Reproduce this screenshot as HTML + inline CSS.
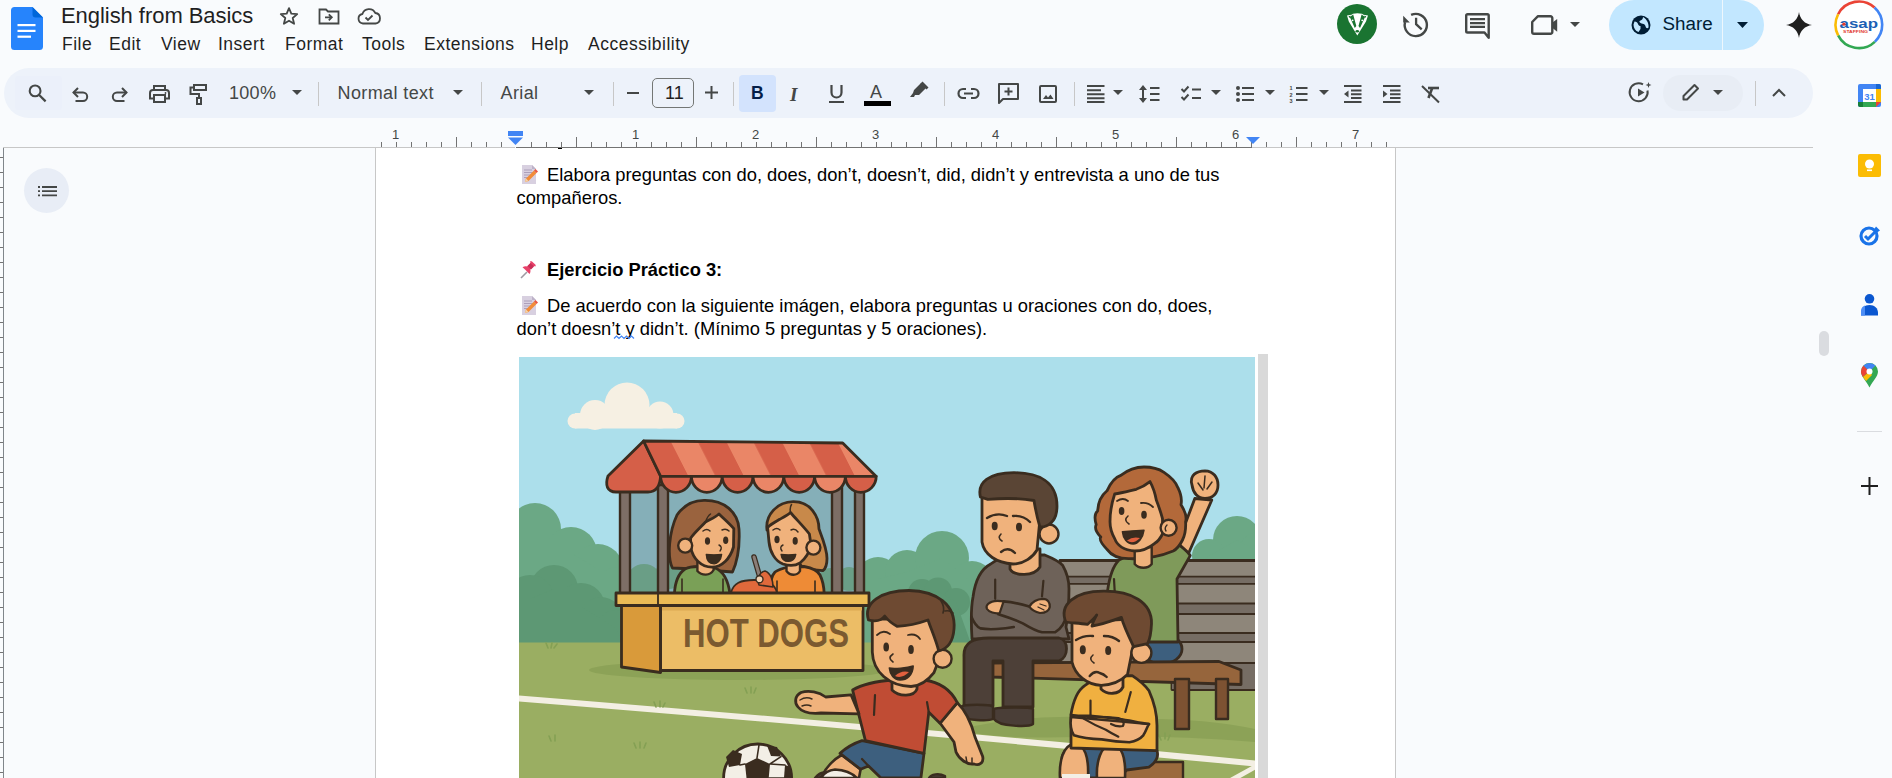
<!DOCTYPE html>
<html><head><meta charset="utf-8">
<style>
*{box-sizing:border-box;margin:0;padding:0}
html,body{width:1892px;height:778px;overflow:hidden;background:#f9fbfd;font-family:"Liberation Sans",sans-serif;color:#1f1f1f}
body{position:relative}
.a{position:absolute}
.t{position:absolute;white-space:nowrap;line-height:1}
.menu{font-size:17.5px;color:#1f1f1f;top:36px;letter-spacing:0.5px}
svg{position:absolute;overflow:visible}
.s{fill:none;stroke:#444746;stroke-width:2;stroke-linecap:butt;stroke-linejoin:miter}
.f{fill:#444746}
.dt{position:absolute;white-space:nowrap;line-height:1;font-size:18.33px;color:#000}
</style></head><body>
<!-- docs icon -->
<svg style="left:11px;top:7px" width="32" height="43" viewBox="0 0 32 43">
<path d="M3.5 0H21.5L32 10.5V39.5a3.5 3.5 0 0 1-3.5 3.5H3.5A3.5 3.5 0 0 1 0 39.5V3.5A3.5 3.5 0 0 1 3.5 0z" fill="#2684fc"/>
<path d="M21.5 0L32 10.5H24.5a3 3 0 0 1-3-3z" fill="#0066da"/>
<rect x="6.5" y="17" width="18" height="2.2" fill="#fff"/>
<rect x="6.5" y="22.8" width="18" height="2.2" fill="#fff"/>
<rect x="6.5" y="28.6" width="13.5" height="2.2" fill="#fff"/>
</svg>
<div class="t" style="left:61px;top:5px;font-size:22px;color:#1f1f1f;letter-spacing:-0.05px">English from Basics</div>
<!-- star -->
<svg style="left:278px;top:6px" width="22" height="20" viewBox="0 0 22 20"><path d="M11 2.2l2.3 5.4 5.9.5-4.5 3.9 1.4 5.8L11 14.7l-5.1 3.1 1.4-5.8-4.5-3.9 5.9-.5z" class="s" style="stroke-width:1.8;stroke-linejoin:round"/></svg>
<!-- folder move -->
<svg style="left:318px;top:8px" width="22" height="17" viewBox="0 0 22 17"><path d="M1.5 1.5h6.5l2 2h10.5v12h-19z" class="s" style="stroke-width:1.8"/><path d="M7 9.3h6.5M10.8 6.3l3 3-3 3" class="s" style="stroke-width:1.8"/></svg>
<!-- cloud check -->
<svg style="left:357px;top:8px" width="24" height="17" viewBox="0 0 24 17"><path d="M6 15.5a4.8 4.8 0 0 1-.6-9.5A7 7 0 0 1 18.3 5a5.3 5.3 0 0 1 .2 10.5z" class="s" style="stroke-width:1.8;stroke-linejoin:round"/><path d="M8.5 9.5l2.5 2.5 4.5-4.5" class="s" style="stroke-width:1.8"/></svg>

<div class="t menu" style="left:62px">File</div>
<div class="t menu" style="left:109px">Edit</div>
<div class="t menu" style="left:161px">View</div>
<div class="t menu" style="left:218px">Insert</div>
<div class="t menu" style="left:285px">Format</div>
<div class="t menu" style="left:362px">Tools</div>
<div class="t menu" style="left:424px">Extensions</div>
<div class="t menu" style="left:531px">Help</div>
<div class="t menu" style="left:588px">Accessibility</div>

<!-- top right -->
<div class="a" style="left:1337px;top:4px;width:40px;height:40px;border-radius:50%;background:#1a7431"></div>
<svg style="left:1337px;top:4px" width="40" height="40" viewBox="0 0 40 40">
<path d="M10 11.5L14.5 10.8L16 9.8Q20.3 8.5 25 9.8L26.5 10.8L31 11.5L29 17.5L20.3 31.5L11.8 17.5Z" fill="#fff"/>
<path d="M12.8 13L16.2 10.5L19.3 22L17.8 24ZM28 13L24.6 10.5L21.5 22L23 24Z" fill="#1a7431"/>
<path d="M11.5 12.2L13.8 11.8L12.6 14z M29.3 12.2L27 11.8L28.2 14z" fill="#1a7431"/>
<circle cx="15.6" cy="16.3" r="0.9" fill="#fff"/><circle cx="25.2" cy="16.3" r="0.9" fill="#fff"/>
<ellipse cx="20.3" cy="27.2" rx="1.8" ry="1.3" fill="#1a7431"/>
</svg>
<!-- history -->
<svg style="left:1401px;top:11px" width="28" height="28" viewBox="0 0 28 28"><path d="M10.11 3.94A11.1 11.1 0 1 1 4.08 11.13" class="s" style="stroke-width:2.4"/><path d="M2.2 4.8V11.4H8.8Z" class="f"/><path d="M15.1 6.8V13.2L20.7 18.4" class="s" style="stroke-width:2.3"/></svg>
<!-- comments -->
<svg style="left:1463px;top:12px" width="28" height="27" viewBox="0 0 28 27"><path d="M4.5 2.2H24.4a1.3 1.3 0 0 1 1.3 1.3V25.8L21.5 20.5H4.5a1.3 1.3 0 0 1-1.3-1.3V3.5a1.3 1.3 0 0 1 1.3-1.3z" class="s" style="stroke-width:2.4;stroke-linejoin:round"/><path d="M7 7.1h15M7 11.1h15M7 14.9h15" class="s" style="stroke-width:2.1"/></svg>
<!-- meet -->
<svg style="left:1531px;top:14px" width="30" height="22" viewBox="0 0 30 22"><path d="M7 2.2h12.5a1.8 1.8 0 0 1 1.8 1.8V18a1.8 1.8 0 0 1-1.8 1.8H3a1.8 1.8 0 0 1-1.8-1.8V8z" class="s" style="stroke-width:2.4;stroke-linejoin:round"/><path d="M21.5 8.5l4.7-3.6V17.7l-4.7-3.6z" class="f"/></svg>
<svg style="left:1570px;top:22px" width="10" height="5" viewBox="0 0 10 5"><path d="M0 0h10L5 5z" class="f"/></svg>
<!-- share -->
<div class="a" style="left:1609px;top:0px;width:155px;height:50px;border-radius:25px;background:#c2e7ff"></div>
<div class="a" style="left:1722px;top:0px;width:1px;height:50px;background:#f9fbfd;opacity:.8"></div>
<svg style="left:1631px;top:15px" width="20" height="20" viewBox="0 0 20 20"><circle cx="10" cy="10" r="9.5" fill="#001d35"/><path d="M3.5 6.5c2 0 3 1 3.5 2.5s1.5 2 2.5 2v3l-2 3c-3-1-5-4-5-7.5zM12 2c0 2 -1 3-2.5 3.5S8 7 9.5 8s3 .5 4 1.5 1 2 1.5 3 2 1 2.5 0c.5-3-1-8-5.5-10.5z" fill="#c2e7ff"/></svg>
<div class="t" style="left:1662.5px;top:15px;font-size:18.8px;color:#001d35">Share</div>
<svg style="left:1737px;top:22px" width="11" height="6" viewBox="0 0 11 6"><path d="M0 0h11L5.5 6z" fill="#001d35"/></svg>
<!-- gemini -->
<svg style="left:1786px;top:12px" width="26" height="26" viewBox="0 0 26 26"><path d="M13 0C13.8 7 19 12.2 26 13 19 13.8 13.8 19 13 26 12.2 19 7 13.8 0 13 7 12.2 12.2 7 13 0z" fill="#1f1f1f"/></svg>
<!-- asap avatar -->
<svg style="left:1834px;top:0px" width="50" height="50" viewBox="0 0 50 50">
<circle cx="24.9" cy="24.8" r="23.3" fill="#fff"/>
<path d="M4.14 14.22A23.3 23.3 0 0 1 40.49 7.48" stroke="#ea4335" stroke-width="2.6" fill="none"/><path d="M40.49 7.48A23.3 23.3 0 0 1 40.79 41.84" stroke="#4285f4" stroke-width="2.6" fill="none"/><path d="M40.79 41.84A23.3 23.3 0 0 1 4.14 35.38" stroke="#34a853" stroke-width="2.6" fill="none"/><path d="M4.14 35.38A23.3 23.3 0 0 1 4.14 14.22" stroke="#fbbc04" stroke-width="2.6" fill="none"/>
<text x="5.5" y="28.4" font-family="Liberation Sans" font-weight="bold" font-size="13.5" fill="#1a5fb4" textLength="38.5" lengthAdjust="spacingAndGlyphs">asap</text>
<circle cx="9.8" cy="24.2" r="1.6" fill="#e23b2e"/>
<text x="9" y="32.6" font-family="Liberation Sans" font-weight="bold" font-size="4" fill="#e23b2e" textLength="25" lengthAdjust="spacingAndGlyphs">STAFFING</text>
</svg>

<!-- toolbar pill -->
<div class="a" style="left:4px;top:68px;width:1809px;height:50px;border-radius:25px;background:#edf2fa"></div>
<!-- search -->
<div class="a" style="left:15px;top:76px;width:47px;height:34px;border-radius:3px;background:#ebf0fa"></div><svg style="left:28px;top:83px" width="20" height="20" viewBox="0 0 20 20"><circle cx="7.1" cy="7.9" r="5.4" class="s" style="stroke-width:2.1"/><path d="M10.9 11.7L17.6 18.4" class="s" style="stroke-width:2.2"/></svg>
<!-- undo -->
<svg style="left:72px;top:87px" width="17" height="15" viewBox="0 0 17 15"><path d="M6 1L1.5 5.5 6 10" class="s" style="stroke-width:2"/><path d="M1.5 5.5h9.5a4.2 4.2 0 0 1 0 8.4H3.5" class="s" style="stroke-width:2"/></svg>
<!-- redo -->
<svg style="left:111px;top:87px" width="17" height="15" viewBox="0 0 17 15"><path d="M11 1l4.5 4.5L11 10" class="s" style="stroke-width:2"/><path d="M15.5 5.5H6a4.2 4.2 0 0 0 0 8.4h7.5" class="s" style="stroke-width:2"/></svg>
<!-- print -->
<svg style="left:149px;top:85px" width="21" height="18" viewBox="0 0 21 18"><path d="M5 5V1h11v4" class="s" style="stroke-width:2"/><path d="M4.5 13.5H1V8a3 3 0 0 1 3-3h13a3 3 0 0 1 3 3v5.5h-3.5" class="s" style="stroke-width:2"/><rect x="5" y="10" width="11" height="7" class="s" style="stroke-width:2"/><circle cx="16.5" cy="8" r="0.9" class="f"/></svg>
<!-- paint format -->
<svg style="left:189px;top:84px" width="18" height="21" viewBox="0 0 18 21"><rect x="5" y="1" width="12" height="5" class="s" style="stroke-width:2"/><path d="M5 3.5H1.5v6.5h8.5v4" class="s" style="stroke-width:2"/><rect x="8" y="14" width="4" height="6" class="s" style="stroke-width:2"/></svg>
<div class="t" style="left:229px;top:84px;font-size:18px;color:#444746;letter-spacing:0.3px">100%</div>
<svg style="left:292px;top:90px" width="10" height="5" viewBox="0 0 10 5"><path d="M0 0h10L5 5z" class="f"/></svg>
<div class="a" style="left:318px;top:82px;width:1px;height:24px;background:#c7c7c7"></div>
<div class="t" style="left:337.5px;top:84px;font-size:18px;color:#444746;letter-spacing:0.4px">Normal text</div>
<svg style="left:453px;top:90px" width="10" height="5" viewBox="0 0 10 5"><path d="M0 0h10L5 5z" class="f"/></svg>
<div class="a" style="left:481px;top:82px;width:1px;height:24px;background:#c7c7c7"></div>
<div class="t" style="left:500.5px;top:84px;font-size:18px;color:#444746;letter-spacing:0.4px">Arial</div>
<svg style="left:584px;top:90px" width="10" height="5" viewBox="0 0 10 5"><path d="M0 0h10L5 5z" class="f"/></svg>
<div class="a" style="left:613px;top:82px;width:1px;height:24px;background:#c7c7c7"></div>
<div class="a" style="left:627px;top:92px;width:12px;height:2px;background:#444746"></div>
<div class="a" style="left:652px;top:78px;width:42px;height:30px;border:1px solid #747775;border-radius:5px"></div>
<div class="t" style="left:665px;top:84px;font-size:18px;color:#1f1f1f">11</div>
<svg style="left:705px;top:86px" width="13" height="13" viewBox="0 0 13 13"><path d="M0 6.5h13M6.5 0v13" class="s" style="stroke-width:2"/></svg>
<div class="a" style="left:733px;top:82px;width:1px;height:24px;background:#c7c7c7"></div>
<div class="a" style="left:739px;top:75px;width:37px;height:37px;border-radius:4px;background:#d3e3fd"></div>
<div class="t" style="left:751px;top:85px;font-size:17.5px;font-weight:bold;color:#041e49">B</div>
<div class="t" style="left:790px;top:85px;font-size:19px;font-style:italic;font-family:'Liberation Serif';font-weight:bold;color:#444746">I</div>
<svg style="left:829px;top:85px" width="15" height="18" viewBox="0 0 15 18"><path d="M2.5 0v7.5a5 5 0 0 0 10 0V0" class="s" style="stroke-width:2.2"/><path d="M0 17h15" class="s" style="stroke-width:2"/></svg>
<div class="t" style="left:870px;top:83px;font-size:18px;color:#444746">A</div>
<div class="a" style="left:864px;top:101px;width:27px;height:5px;background:#000"></div>
<svg style="left:910px;top:81px" width="19" height="17" viewBox="0 0 19 17"><path d="M11 2l5 5-7 7H5l-1 2H0l3-4 1-3z" class="f"/><path d="M12.5 0.5l6 6-2 2-6-6z" class="f"/></svg>
<div class="a" style="left:944px;top:82px;width:1px;height:24px;background:#c7c7c7"></div>
<!-- link -->
<svg style="left:958px;top:88px" width="21" height="11" viewBox="0 0 21 11"><path d="M8 1H5a4.5 4.5 0 0 0 0 9h3M13 1h3a4.5 4.5 0 0 1 0 9h-3M6 5.5h9" class="s" style="stroke-width:2.2"/></svg>
<!-- comment add -->
<svg style="left:998px;top:83px" width="21" height="21" viewBox="0 0 21 21"><path d="M1 1h19v15H5l-4 4z" class="s" style="stroke-width:2;stroke-linejoin:round"/><path d="M10.5 4.5v8M6.5 8.5h8" class="s" style="stroke-width:2"/></svg>
<!-- image -->
<svg style="left:1039px;top:85px" width="18" height="18" viewBox="0 0 18 18"><rect x="1" y="1" width="16" height="16" rx="1" class="s" style="stroke-width:2"/><path d="M4 14l3-4 2 2.5 2.5-3 3 4.5z" class="f"/></svg>
<div class="a" style="left:1074px;top:82px;width:1px;height:24px;background:#c7c7c7"></div>
<!-- align -->
<svg style="left:1087px;top:85px" width="18" height="18" viewBox="0 0 18 18"><path d="M0 1h17.5M0 5.2h14M0 9.2h17.5M0 13.2h17.5M0 17h17.5" class="s" style="stroke-width:2"/></svg>
<svg style="left:1113px;top:90px" width="10" height="5" viewBox="0 0 10 5"><path d="M0 0h10L5 5z" class="f"/></svg>
<!-- line spacing -->
<svg style="left:1139px;top:85px" width="21" height="18" viewBox="0 0 21 18"><path d="M4 2v14" class="s" style="stroke-width:2"/><path d="M0 5l4-5 4 5zM0 13l4 5 4-5z" class="f"/><path d="M11 3h9.5M11 9h9.5M11 15h9.5" class="s" style="stroke-width:2"/></svg>
<!-- checklist -->
<svg style="left:1181px;top:85px" width="20" height="18" viewBox="0 0 20 18"><path d="M0.5 4l2.5 2.5 4.5-5M0.5 12l2.5 2.5 4.5-5" class="s" style="stroke-width:2"/><path d="M11 4.5h9M11 13h9" class="s" style="stroke-width:2"/></svg>
<svg style="left:1211px;top:90px" width="10" height="5" viewBox="0 0 10 5"><path d="M0 0h10L5 5z" class="f"/></svg>
<!-- bullets -->
<svg style="left:1236px;top:86px" width="18" height="16" viewBox="0 0 18 16"><circle cx="2" cy="2" r="2" class="f"/><circle cx="2" cy="8" r="2" class="f"/><circle cx="2" cy="14" r="2" class="f"/><path d="M6 2h12M6 8h12M6 14h12" class="s" style="stroke-width:2"/></svg>
<svg style="left:1265px;top:90px" width="10" height="5" viewBox="0 0 10 5"><path d="M0 0h10L5 5z" class="f"/></svg>
<!-- numbered -->
<svg style="left:1289px;top:85px" width="19" height="18" viewBox="0 0 19 18"><text x="0.5" y="5" font-size="5.5" font-family="Liberation Sans" font-weight="bold" fill="#444746">1</text><text x="0.5" y="11.5" font-size="5.5" font-family="Liberation Sans" font-weight="bold" fill="#444746">2</text><text x="0.5" y="18" font-size="5.5" font-family="Liberation Sans" font-weight="bold" fill="#444746">3</text><path d="M7 3h11.5M7 9h11.5M7 15h11.5" class="s" style="stroke-width:2"/></svg>
<svg style="left:1319px;top:90px" width="10" height="5" viewBox="0 0 10 5"><path d="M0 0h10L5 5z" class="f"/></svg>
<!-- indent dec -->
<svg style="left:1344px;top:85px" width="18" height="18" viewBox="0 0 18 18"><path d="M0 1h17.5M7 5.5h10.5M7 9.2h10.5M7 13h10.5M0 17h17.5" class="s" style="stroke-width:2"/><path d="M4.5 5.5v7L0 9z" class="f"/></svg>
<!-- indent inc -->
<svg style="left:1383px;top:85px" width="18" height="18" viewBox="0 0 18 18"><path d="M0 1h17.5M7 5.5h10.5M7 9.2h10.5M7 13h10.5M0 17h17.5" class="s" style="stroke-width:2"/><path d="M0 5.5v7L4.5 9z" class="f"/></svg>
<!-- clear format -->
<svg style="left:1421px;top:85px" width="19" height="18" viewBox="0 0 19 18"><path d="M7 3h11" class="s" style="stroke-width:2.6"/><path d="M11 3.5L7.5 13" class="s" style="stroke-width:2.6"/><path d="M1 1l17 16.5" class="s" style="stroke-width:2"/></svg>
<!-- right toolbar -->
<svg style="left:1630px;top:82px" width="22" height="21" viewBox="0 0 22 21"><path d="M17.5 8.5A9 9 0 1 1 13 2.3" class="s" style="stroke-width:2"/><path d="M8 6.5v8l6.5-4z" class="f"/><path d="M18.5 0l.8 2.2 2.2.8-2.2.8-.8 2.2-.8-2.2-2.2-.8 2.2-.8z" class="f"/></svg>
<div class="a" style="left:1663px;top:75px;width:80px;height:36px;border-radius:18px;background:#e8edf5"></div>
<svg style="left:1682px;top:84px" width="18" height="17" viewBox="0 0 18 17"><path d="M1.5 15.5v-3.5L12.5 1l3.5 3.5L5 15.5z" class="s" style="stroke-width:2;stroke-linejoin:round"/></svg>
<svg style="left:1713px;top:90px" width="10" height="5" viewBox="0 0 10 5"><path d="M0 0h10L5 5z" class="f"/></svg>
<div class="a" style="left:1755px;top:81px;width:1px;height:25px;background:#c7c7c7"></div>
<svg style="left:1772px;top:88px" width="14" height="9" viewBox="0 0 14 9"><path d="M1 8l6-6 6 6" class="s" style="stroke-width:2"/></svg>

<!-- side panel -->
<svg style="left:1858px;top:84px" width="23" height="23" viewBox="0 0 23 23">
<rect x="0" y="0" width="23" height="23" rx="2" fill="#4285f4"/>
<rect x="5" y="5" width="13" height="13" fill="#fff"/>
<rect x="18" y="5" width="5" height="13" fill="#fbbc04"/>
<rect x="5" y="18" width="13" height="5" fill="#34a853"/>
<path d="M0 18h5v5H2a2 2 0 0 1-2-2z" fill="#188038"/>
<path d="M18 18h5l-5 5z" fill="#ea4335"/>
<path d="M18 0h3a2 2 0 0 1 2 2v3h-5z" fill="#1967d2"/>
<text x="11.5" y="15.5" font-size="9.5" font-family="Liberation Sans" font-weight="bold" fill="#4285f4" text-anchor="middle">31</text>
</svg>
<svg style="left:1858px;top:154px" width="23" height="23" viewBox="0 0 23 23"><rect width="23" height="23" rx="2" fill="#fbbc04"/><circle cx="11.5" cy="10" r="4.5" fill="#fff"/><rect x="9" y="15.5" width="5" height="1.6" fill="#fff"/></svg>
<svg style="left:1859px;top:225px" width="22" height="21" viewBox="0 0 22 21"><circle cx="10" cy="11" r="8" fill="none" stroke="#1a73e8" stroke-width="3.2"/><path d="M6 11l3 3 8-8" fill="none" stroke="#1a73e8" stroke-width="3"/><path d="M17 1.5l4 4-3 2-3-3z" fill="#1a73e8"/></svg>
<svg style="left:1861px;top:294px" width="17" height="22" viewBox="0 0 17 22"><circle cx="8.5" cy="4.8" r="4.8" fill="#0b57d0"/><path d="M0 19c0-5 3.5-8 8.5-8s8.5 3 8.5 8v2.5H0z" fill="#0b57d0"/><path d="M0 17c0-3 2-5 4-5.5v10H0z" fill="#4c8df6"/></svg>
<svg style="left:1861px;top:363px" width="17" height="25" viewBox="0 0 17 25"><path d="M8.5 0A8.5 8.5 0 0 1 17 8.5c0 5-5 9-8.5 16C5 17.5 0 13.5 0 8.5A8.5 8.5 0 0 1 8.5 0z" fill="#34a853"/><path d="M2.5 2.5A8.5 8.5 0 0 0 0 8.5c0 2 .8 3.8 2 5.5L8.5 8z" fill="#ea4335"/><path d="M8.5 0a8.5 8.5 0 0 0-6 2.5L8.5 8.5 14.5 2.5A8.5 8.5 0 0 0 8.5 0z" fill="#4285f4"/><path d="M2 14c1 1.5 2 2.5 3 4l6-6-2.5-3.5z" fill="#fbbc04"/><circle cx="8.5" cy="8.5" r="3" fill="#fff"/></svg>
<div class="a" style="left:1857px;top:431px;width:25px;height:1px;background:#dadce0"></div>
<svg style="left:1861px;top:477px" width="17" height="18" viewBox="0 0 17 18"><path d="M0 9h17M8.5 0v18" stroke="#1f1f1f" stroke-width="2"/></svg>
<div class="a" style="left:1819px;top:331px;width:10px;height:25px;border-radius:5px;background:#dadce0"></div>

<!-- ruler -->
<div class="a" style="left:375px;top:147px;width:140px;height:1px;background:#c7c7c7"></div>
<div class="a" style="left:516px;top:147px;width:736px;height:1px;background:#737373"></div><div class="a" style="left:1252px;top:147px;width:561px;height:1px;background:#c7c7c7"></div>
<svg style="left:0;top:118px" width="1813" height="30" viewBox="0 0 1813 30" id="ruler"><rect x="381" y="24" width="1" height="5" fill="#737373"/><rect x="396" y="24" width="1" height="5" fill="#737373"/><rect x="411" y="24" width="1" height="5" fill="#737373"/><rect x="426" y="24" width="1" height="5" fill="#737373"/><rect x="441" y="24" width="1" height="5" fill="#737373"/><rect x="456" y="19" width="1" height="10" fill="#737373"/><rect x="471" y="24" width="1" height="5" fill="#737373"/><rect x="486" y="24" width="1" height="5" fill="#737373"/><rect x="501" y="24" width="1" height="5" fill="#737373"/><rect x="531" y="24" width="1" height="5" fill="#737373"/><rect x="546" y="24" width="1" height="5" fill="#737373"/><rect x="561" y="24" width="1" height="5" fill="#737373"/><rect x="576" y="19" width="1" height="10" fill="#737373"/><rect x="591" y="24" width="1" height="5" fill="#737373"/><rect x="606" y="24" width="1" height="5" fill="#737373"/><rect x="621" y="24" width="1" height="5" fill="#737373"/><rect x="636" y="24" width="1" height="5" fill="#737373"/><rect x="651" y="24" width="1" height="5" fill="#737373"/><rect x="666" y="24" width="1" height="5" fill="#737373"/><rect x="681" y="24" width="1" height="5" fill="#737373"/><rect x="696" y="19" width="1" height="10" fill="#737373"/><rect x="711" y="24" width="1" height="5" fill="#737373"/><rect x="726" y="24" width="1" height="5" fill="#737373"/><rect x="741" y="24" width="1" height="5" fill="#737373"/><rect x="756" y="24" width="1" height="5" fill="#737373"/><rect x="771" y="24" width="1" height="5" fill="#737373"/><rect x="786" y="24" width="1" height="5" fill="#737373"/><rect x="801" y="24" width="1" height="5" fill="#737373"/><rect x="816" y="19" width="1" height="10" fill="#737373"/><rect x="831" y="24" width="1" height="5" fill="#737373"/><rect x="846" y="24" width="1" height="5" fill="#737373"/><rect x="861" y="24" width="1" height="5" fill="#737373"/><rect x="876" y="24" width="1" height="5" fill="#737373"/><rect x="891" y="24" width="1" height="5" fill="#737373"/><rect x="906" y="24" width="1" height="5" fill="#737373"/><rect x="921" y="24" width="1" height="5" fill="#737373"/><rect x="936" y="19" width="1" height="10" fill="#737373"/><rect x="951" y="24" width="1" height="5" fill="#737373"/><rect x="966" y="24" width="1" height="5" fill="#737373"/><rect x="981" y="24" width="1" height="5" fill="#737373"/><rect x="996" y="24" width="1" height="5" fill="#737373"/><rect x="1011" y="24" width="1" height="5" fill="#737373"/><rect x="1026" y="24" width="1" height="5" fill="#737373"/><rect x="1041" y="24" width="1" height="5" fill="#737373"/><rect x="1056" y="19" width="1" height="10" fill="#737373"/><rect x="1071" y="24" width="1" height="5" fill="#737373"/><rect x="1086" y="24" width="1" height="5" fill="#737373"/><rect x="1101" y="24" width="1" height="5" fill="#737373"/><rect x="1116" y="24" width="1" height="5" fill="#737373"/><rect x="1131" y="24" width="1" height="5" fill="#737373"/><rect x="1146" y="24" width="1" height="5" fill="#737373"/><rect x="1161" y="24" width="1" height="5" fill="#737373"/><rect x="1176" y="19" width="1" height="10" fill="#737373"/><rect x="1191" y="24" width="1" height="5" fill="#737373"/><rect x="1206" y="24" width="1" height="5" fill="#737373"/><rect x="1221" y="24" width="1" height="5" fill="#737373"/><rect x="1236" y="24" width="1" height="5" fill="#737373"/><rect x="1251" y="24" width="1" height="5" fill="#737373"/><rect x="1266" y="24" width="1" height="5" fill="#737373"/><rect x="1281" y="24" width="1" height="5" fill="#737373"/><rect x="1296" y="19" width="1" height="10" fill="#737373"/><rect x="1311" y="24" width="1" height="5" fill="#737373"/><rect x="1326" y="24" width="1" height="5" fill="#737373"/><rect x="1341" y="24" width="1" height="5" fill="#737373"/><rect x="1356" y="24" width="1" height="5" fill="#737373"/><rect x="1371" y="24" width="1" height="5" fill="#737373"/><rect x="1386" y="24" width="1" height="5" fill="#737373"/><text x="395.5" y="20.6" font-size="13px" font-family="Liberation Sans" fill="#444746" text-anchor="middle">1</text><text x="635.5" y="20.6" font-size="13px" font-family="Liberation Sans" fill="#444746" text-anchor="middle">1</text><text x="755.5" y="20.6" font-size="13px" font-family="Liberation Sans" fill="#444746" text-anchor="middle">2</text><text x="875.5" y="20.6" font-size="13px" font-family="Liberation Sans" fill="#444746" text-anchor="middle">3</text><text x="995.5" y="20.6" font-size="13px" font-family="Liberation Sans" fill="#444746" text-anchor="middle">4</text><text x="1115.5" y="20.6" font-size="13px" font-family="Liberation Sans" fill="#444746" text-anchor="middle">5</text><text x="1235.5" y="20.6" font-size="13px" font-family="Liberation Sans" fill="#444746" text-anchor="middle">6</text><text x="1355.5" y="20.6" font-size="13px" font-family="Liberation Sans" fill="#444746" text-anchor="middle">7</text><rect x="508" y="13" width="15" height="5" fill="#4285f4"/><path d="M508 19.5h15l-7.5 7.5z" fill="#4285f4"/><path d="M1246 19h14l-7 7z" fill="#4285f4"/></svg>

<div class="a" id="cursor-mark" style="left:558px;top:148px;width:4px;height:1px;background:#000;z-index:5"></div>
<!-- left vertical ruler -->
<div class="a" style="left:3px;top:147px;width:1px;height:631px;background:#80868b"></div><div class="a" style="left:3px;top:147px;width:372px;height:1px;background:#c7c7c7"></div>
<svg style="left:0;top:147px" width="4" height="631" id="vruler"><rect x="0" y="10" width="3" height="1" fill="#737373"/><rect x="0" y="25" width="3" height="1" fill="#737373"/><rect x="0" y="40" width="3" height="1" fill="#737373"/><rect x="0" y="55" width="3" height="1" fill="#737373"/><rect x="0" y="70" width="3" height="1" fill="#737373"/><rect x="0" y="85" width="3" height="1" fill="#737373"/><rect x="0" y="100" width="3" height="1" fill="#737373"/><rect x="0" y="115" width="3" height="1" fill="#737373"/><rect x="0" y="130" width="3" height="1" fill="#737373"/><rect x="0" y="145" width="3" height="1" fill="#737373"/><rect x="0" y="160" width="3" height="1" fill="#737373"/><rect x="0" y="175" width="3" height="1" fill="#737373"/><rect x="0" y="190" width="3" height="1" fill="#737373"/><rect x="0" y="205" width="3" height="1" fill="#737373"/><rect x="0" y="220" width="3" height="1" fill="#737373"/><rect x="0" y="235" width="3" height="1" fill="#737373"/><rect x="0" y="250" width="3" height="1" fill="#737373"/><rect x="0" y="265" width="3" height="1" fill="#737373"/><rect x="0" y="280" width="3" height="1" fill="#737373"/><rect x="0" y="295" width="3" height="1" fill="#737373"/><rect x="0" y="310" width="3" height="1" fill="#737373"/><rect x="0" y="325" width="3" height="1" fill="#737373"/><rect x="0" y="340" width="3" height="1" fill="#737373"/><rect x="0" y="355" width="3" height="1" fill="#737373"/><rect x="0" y="370" width="3" height="1" fill="#737373"/><rect x="0" y="385" width="3" height="1" fill="#737373"/><rect x="0" y="400" width="3" height="1" fill="#737373"/><rect x="0" y="415" width="3" height="1" fill="#737373"/><rect x="0" y="430" width="3" height="1" fill="#737373"/><rect x="0" y="445" width="3" height="1" fill="#737373"/><rect x="0" y="460" width="3" height="1" fill="#737373"/><rect x="0" y="475" width="3" height="1" fill="#737373"/><rect x="0" y="490" width="3" height="1" fill="#737373"/><rect x="0" y="505" width="3" height="1" fill="#737373"/><rect x="0" y="520" width="3" height="1" fill="#737373"/><rect x="0" y="535" width="3" height="1" fill="#737373"/><rect x="0" y="550" width="3" height="1" fill="#737373"/><rect x="0" y="565" width="3" height="1" fill="#737373"/><rect x="0" y="580" width="3" height="1" fill="#737373"/><rect x="0" y="595" width="3" height="1" fill="#737373"/><rect x="0" y="610" width="3" height="1" fill="#737373"/><rect x="0" y="625" width="3" height="1" fill="#737373"/></svg>

<!-- outline button -->
<div class="a" style="left:24px;top:168px;width:45px;height:45px;border-radius:50%;background:#e8edf6"></div>
<svg style="left:38px;top:186px" width="20" height="12" viewBox="0 0 20 12"><path d="M0 1h2M0 5.2h2M0 9.3h2M4 1h15M4 5.2h15M4 9.3h15" stroke="#444746" stroke-width="1.8"/></svg>

<!-- page -->
<div class="a" style="left:375px;top:148px;width:1021px;height:630px;background:#fff;border-left:1px solid #c7c7c7;border-right:1px solid #c7c7c7"></div>
<!-- doc text -->
<div class="dt" style="left:547px;top:165.5px">Elabora preguntas con do, does, don’t, doesn’t, did, didn’t y entrevista a uno de tus</div>
<div class="dt" style="left:516.5px;top:189.2px">compañeros.</div>
<div class="dt" style="left:547px;top:261.4px;font-weight:bold">Ejercicio Práctico 3:</div>
<div class="dt" style="left:547px;top:297px">De acuerdo con la siguiente imágen, elabora preguntas u oraciones con do, does,</div>
<div class="dt" style="left:516.5px;top:319.9px">don’t doesn’t y didn’t. (Mínimo 5 preguntas y 5 oraciones).</div>
<svg style="left:614px;top:335px" width="20" height="5" viewBox="0 0 20 5"><path d="M0 3.5l2.5-2.5 2.5 2.5 2.5-2.5 2.5 2.5 2.5-2.5 2.5 2.5 2.5-2.5 2.5 2.5" fill="none" stroke="#4285f4" stroke-width="1.2"/></svg>
<!-- memo emojis -->
<svg style="left:521px;top:165px" width="18" height="19" viewBox="0 0 18 19" id="memo1"><path d="M1 0h10l4 4v15H1z" fill="#d8d0e0"/><path d="M11 0l4 4h-4z" fill="#bdb2c8"/><path d="M3 5h8M3 7.5h10M3 10h10M3 12.5h6" stroke="#a89ab5" stroke-width="0.9"/><path d="M4 17l1-3.5 8-8 2.5 2.5-8 8z" fill="#f28c38"/><path d="M13 5.5l1.5-1.5 2.5 2.5-1.5 1.5z" fill="#e8553f"/><path d="M4 17l1-3.5 2.5 2.5z" fill="#f5d3a8"/></svg>
<svg style="left:521px;top:296px" width="18" height="19" viewBox="0 0 18 19"><path d="M1 0h10l4 4v15H1z" fill="#d8d0e0"/><path d="M11 0l4 4h-4z" fill="#bdb2c8"/><path d="M3 5h8M3 7.5h10M3 10h10M3 12.5h6" stroke="#a89ab5" stroke-width="0.9"/><path d="M4 17l1-3.5 8-8 2.5 2.5-8 8z" fill="#f28c38"/><path d="M13 5.5l1.5-1.5 2.5 2.5-1.5 1.5z" fill="#e8553f"/><path d="M4 17l1-3.5 2.5 2.5z" fill="#f5d3a8"/></svg>
<!-- pin -->
<svg style="left:520px;top:260px" width="19" height="19" viewBox="0 0 19 19"><path d="M1 18l6-6" stroke="#9e9aa3" stroke-width="1.6"/><path d="M5 9.5l4.5 4.5c1-1.5 1.2-3 .8-4.5l3.5-3.5 1.5.5c.5-.5 .5-1.5 0-2L12 1.5c-.5-.5-1.5-.5-2 0l.5 1.5-3.5 3.5c-1.5-.4-3-.2-4.5.8z" fill="#e8426a"/><path d="M10.5 3l3.5 3.5-3 3-3.5-3.5z" fill="#c92e57"/></svg>
<!-- image -->
<div class="a" style="left:1258px;top:354px;width:10px;height:424px;background:#d9d9d9"></div>
<svg style="left:519px;top:357px" width="736" height="421" viewBox="0 0 736 421" id="illus">
<defs>
<pattern id="stripes" patternUnits="userSpaceOnUse" width="55.5" height="40" patternTransform="translate(151.5 84) skewX(27)">
<rect width="55.5" height="40" fill="#d55f48"/>
<rect x="0" width="27" height="40" fill="#ea8667"/>
</pattern>
<clipPath id="imgclip"><rect width="736" height="421"/></clipPath>
</defs>
<g clip-path="url(#imgclip)" stroke-linejoin="round" stroke-linecap="round">
<rect width="736" height="421" fill="#acdfeb"/>
<!-- cloud -->
<g fill="#f6f0e3">
<circle cx="56" cy="64" r="7.5"/>
<circle cx="76" cy="58" r="15"/>
<circle cx="108" cy="48" r="22.5"/>
<circle cx="141" cy="58" r="13.5"/>
<circle cx="158" cy="64" r="7.5"/>
<rect x="56" y="56" width="102" height="15.5"/>
</g>
<!-- back bushes -->
<g fill="#6ba885">
<circle cx="16" cy="172" r="26"/>
<circle cx="52" cy="196" r="26"/>
<circle cx="79" cy="212" r="25"/>
<circle cx="98" cy="232" r="22"/>
<path d="M0 172H16L52 196L79 212L98 232L120 295H0Z"/>
<circle cx="359" cy="222" r="22"/>
<circle cx="388" cy="215" r="22"/>
<circle cx="423" cy="201" r="27"/>
<circle cx="453" cy="226" r="22"/>
<path d="M340 222H359L388 215L423 201L453 226L475 295H340Z"/>
<circle cx="718" cy="183" r="24"/>
<circle cx="690" cy="199" r="17"/>
<circle cx="740" cy="195" r="20"/>
<path d="M690 199L718 183L740 195V215H670Z"/>
</g>
<g fill="#5d9874">
<circle cx="35" cy="232" r="24"/>
<circle cx="11" cy="242" r="24"/>
<circle cx="62" cy="250" r="24"/>
<circle cx="82" cy="262" r="22"/>
<circle cx="97" cy="272" r="19"/>
<path d="M0 242H11L35 232L62 250L82 262L97 272L110 295H0Z"/>
<circle cx="403" cy="236" r="14"/>
<circle cx="419" cy="234.5" r="14"/>
<circle cx="437" cy="245" r="14"/>
<path d="M390 236H403L419 234.5L437 245L455 295H390Z"/>
</g>
<!-- grass -->
<rect x="0" y="285.5" width="736" height="136" fill="#9aae62"/>
<ellipse cx="220" cy="313" rx="150" ry="10" fill="#8ca257"/>
<path d="M450 370 Q520 355 600 362 Q680 360 736 372 L736 385 Q650 378 560 380 Q480 382 450 375z" fill="#8ca257"/>
<!-- field line -->
<path d="M-5 341 Q345 369 741 407" stroke="#f3efe3" stroke-width="6" fill="none"/>
<path d="M700 430 L745 405" stroke="#f3efe3" stroke-width="5" fill="none"/>
<!-- grass tufts -->
<g stroke="#84a054" stroke-width="1.6" fill="none">
<path d="M27 286l2 5M33 286l-1 5M38 287l-3 4"/>
<path d="M115 386l2 5M121 385l0 6M127 386l-2 5"/>
<path d="M135 345l2 5M141 344l0 6M146 346l-2 4"/>
<path d="M226 331l2 5M232 330l0 6M237 331l-2 5"/>
<path d="M30 379l2 5M36 378l0 6"/>
<path d="M640 378l2 5M646 376l0 6M651 378l-2 5"/>
</g>

<!-- STAND interior -->
<rect x="111" y="125" width="225" height="112" fill="#85afb8"/>
<g fill="#6a9e86">
<circle cx="125" cy="225" r="18"/>
<circle cx="150" cy="218" r="14"/>
<circle cx="312" cy="225" r="14"/>
<circle cx="330" cy="222" r="12"/>
</g>
<!-- left girl -->
<path d="M153.4 211C148 200 150 175 158 158C165 148 175 143.4 185 143.4C205 143 219 155 220 172C221 190 218 205 213.5 215L175 212Z" fill="#9a633e" stroke="#3a2c1f" stroke-width="2.8"/>
<path d="M155.4 237C156 225 160 216 166 212C172 209 178 209 186 210L196 211C204 214 209 222 211 237Z" fill="#7aa057" stroke="#3a2c1f" stroke-width="2.8"/>
<path d="M163 222V236M204 222V236" stroke="#3a2c1f" stroke-width="1.6"/>
<path d="M178.4 203V214C183 219 191 219 194.6 213V203Z" fill="#f0b27c" stroke="#3a2c1f" stroke-width="2.4"/>
<path d="M171.6 181.2C176 175 182 170 186.5 165C192 162 197 160 200 156.9C205 162 211 167 214.8 171.7L214.5 190C211 202 203 210 193 210.2C182 210 174 202 171.6 190Z" fill="#f0b27c" stroke="#3a2c1f" stroke-width="2.8"/>
<circle cx="166.2" cy="188.6" r="7" fill="#f0b27c" stroke="#3a2c1f" stroke-width="2.4"/>
<path d="M186.5 165q2 -6 5 -8" stroke="#3a2c1f" stroke-width="1.5" fill="none"/>
<ellipse cx="188.5" cy="184" rx="2.6" ry="3.8" fill="#3a2c1f"/>
<ellipse cx="206.7" cy="183.2" rx="2.6" ry="3.8" fill="#3a2c1f"/>
<path d="M184 174q4 -3 7 0M203 173q4 -2 7 1" stroke="#3a2c1f" stroke-width="1.5" fill="none"/>
<path d="M200 188q4 2 1 6" stroke="#3a2c1f" stroke-width="1.4" fill="none"/>
<path d="M187.2 197.4C192 198 198 198 202.7 197.4C202 204 198 207 195 206.8C190 206.8 187.5 203 187.2 197.4Z" fill="#3a2c1f" stroke="#3a2c1f" stroke-width="1.2"/>
<!-- right girl -->
<path d="M248 173C246 158 258 145 274.2 144.7C292 144.5 300 160 300 172C303 180 308 192 308 201.4C308 208 306 212 303.9 213.6L285 212L252 175Z" fill="#c8894a" stroke="#3a2c1f" stroke-width="2.8"/>
<path d="M250 237C251 226 252 219 256 215C260 212 265 211 270 210L285 209.5C293 211 299 214 301 218C304 224 305 230 305.2 237Z" fill="#ee8b36" stroke="#3a2c1f" stroke-width="2.8"/>
<path d="M258 224V236M296 224V236" stroke="#3a2c1f" stroke-width="1.6"/>
<path d="M267.5 202V214C271 219 278 219 281 214V202Z" fill="#f0b27c" stroke="#3a2c1f" stroke-width="2.4"/>
<path d="M248.6 170.4C252 167 256 165 260.7 162.3C265 160 269 158 271.5 155.5C277 162 285 170 290.4 177L292 188C290 197 286 202 281 206C276 209 270 209 264 207C256 204 251 195 250 185Z" fill="#f0b27c" stroke="#3a2c1f" stroke-width="2.8"/>
<circle cx="294.4" cy="190.6" r="7" fill="#f0b27c" stroke="#3a2c1f" stroke-width="2.4"/>
<path d="M271.5 155.5q-1 -5 1 -8" stroke="#3a2c1f" stroke-width="1.5" fill="none"/>
<ellipse cx="258" cy="182.5" rx="2.6" ry="3.8" fill="#3a2c1f"/>
<ellipse cx="276.2" cy="183.9" rx="2.6" ry="3.8" fill="#3a2c1f"/>
<path d="M254 173q4 -3 7 0M272 173q4 -2 7 2" stroke="#3a2c1f" stroke-width="1.5" fill="none"/>
<path d="M264 188q-4 2 -1 6" stroke="#3a2c1f" stroke-width="1.4" fill="none"/>
<path d="M262 197.4C267 198 272 198 276.9 197.4C276 202 273 204.5 269.5 204.5C265 204.5 262.5 202 262 197.4Z" fill="#3a2c1f" stroke="#3a2c1f" stroke-width="1.2"/>
<!-- tray -->
<path d="M235 200L240.5 219" stroke="#3a2c1f" stroke-width="5.5"/>
<path d="M235 200L240.5 219" stroke="#8a7e78" stroke-width="3"/>
<path d="M212 236C214 226 222 223 235 223C248 223 256 226 258 236Z" fill="#e0693b" stroke="#3a2c1f" stroke-width="1.8"/>
<path d="M246 214C252 216 254 224 254 230L240 228C238 222 240 215 246 214Z" fill="#e0693b" stroke="#3a2c1f" stroke-width="1.6"/>
<circle cx="240.5" cy="222.3" r="3.5" fill="#f0d0b0" stroke="#3a2c1f" stroke-width="1.4"/>
<!-- posts -->
<g fill="#7d6e66" stroke="#3a2c1f" stroke-width="2.4">
<rect x="101" y="128" width="10" height="109"/>
<rect x="139" y="128" width="10" height="109"/>
<rect x="313" y="128" width="10" height="109"/>
<rect x="336" y="128" width="9" height="109"/>
</g>
<!-- counter -->
<path d="M102.5 248.5H141.6V315.5L102.5 310Z" fill="#d99a3a" stroke="#3a2c1f" stroke-width="2.8"/>
<rect x="141.6" y="248.5" width="202.4" height="65" fill="#ecbd66" stroke="#3a2c1f" stroke-width="2.8"/>
<rect x="143" y="249.5" width="200" height="4" fill="#dcaa52"/>
<rect x="97" y="236" width="253" height="12.5" fill="#ecbb55" stroke="#3a2c1f" stroke-width="2.8"/>
<path d="M139 236v12.5" stroke="#3a2c1f" stroke-width="1.8"/>
<text x="164" y="290" font-family="Liberation Sans" font-weight="bold" font-size="40" fill="#7b5a30" textLength="166" lengthAdjust="spacingAndGlyphs">HOT DOGS</text>
<!-- awning -->
<path d="M124.6 84L89 119C86 128 88 135 97 135L129 135C137 135 141 130 141.6 119Z" fill="#d55f48" stroke="#3a2c1f" stroke-width="2.8"/>
<path d="M124.6 84L323.7 86L357 119.3L141.6 119.3Z" fill="url(#stripes)" stroke="#3a2c1f" stroke-width="2.8"/>
<g stroke="#3a2c1f" stroke-width="2.8">
<path d="M141.6 119.3a15.4 16 0 0 0 30.8 0z" fill="#d55f48"/>
<path d="M172.4 119.3a15.4 16 0 0 0 30.8 0z" fill="#ea8667"/>
<path d="M203.2 119.3a15.4 16 0 0 0 30.8 0z" fill="#d55f48"/>
<path d="M234 119.3a15.4 16 0 0 0 30.8 0z" fill="#ea8667"/>
<path d="M264.8 119.3a15.4 16 0 0 0 30.8 0z" fill="#d55f48"/>
<path d="M295.6 119.3a15.4 16 0 0 0 30.8 0z" fill="#ea8667"/>
<path d="M326.4 119.3a15.4 16 0 0 0 30.8 0z" fill="#d55f48"/>
</g>

<!-- bench backrest -->
<path d="M541 203.5H741V332.5H653V306H541Z" fill="#8e867a" stroke="#3a2c1f" stroke-width="2.8"/>
<g fill="#766d64">
<rect x="541" y="219.6" width="200" height="7.3"/>
<rect x="541" y="246.5" width="200" height="10.5"/>
<rect x="541" y="276" width="200" height="9"/>
<rect x="653" y="306" width="88" height="26"/>
</g>
<g stroke="#3a2c1f" stroke-width="1.8">
<path d="M541 219.6H741M541 226.9H741M541 246.5H741M541 257H741M541 276H741M541 285H741M653 306H741"/>
</g>
<!-- woman -->
<ellipse cx="643" cy="292" rx="20" ry="15" fill="#3d5f7e" stroke="#3a2c1f" stroke-width="2.8"/>
<path d="M587 285C586 245 588 215 600 203C608 198 615 196 625 196L657 186C664 190 669 195 671.2 198.6L658 222L659 285Z" fill="#7f9a5a" stroke="#3a2c1f" stroke-width="2.8"/>
<path d="M595 222L596 240" stroke="#3a2c1f" stroke-width="2.2"/>
<path d="M658.9 186.3L675.8 141.5L692.8 143L669.7 196Z" fill="#f0b27c" stroke="#3a2c1f" stroke-width="2.8"/>
<path d="M673 128C670 118 678 113.8 686 113.8C694 114 699 120 699 128C699 136 694 141.5 686 141.5C679 141.5 674 136 673 128Z" fill="#f0b27c" stroke="#3a2c1f" stroke-width="2.8"/>
<path d="M679 126l5 7M686 119l-1 12M693 125l-5 7" stroke="#3a2c1f" stroke-width="1.5"/>
<path d="M611 201.7C600 202 592 198 588 192.4C582 186 580 182 581.8 180C576 174 576 170 577.2 167.7C575 160 576 156 578.7 153.9C579 145 583 138 588 133.8C592 125 597 120 601.8 118.4C610 112 618 110 625 110C634 110 640 112 645 115.3C652 120 657 125 658.9 130.7C662 137 663 143 662 147.7C666 154 668 160 666.6 164.7C667 172 666 178 663.5 183C661 188 658 192 654.2 194C640 200 625 202 611 201.7Z" fill="#b3693a" stroke="#3a2c1f" stroke-width="2.8"/>
<path d="M615.7 190V207C620 212 629 212 632.7 207V190Z" fill="#f0b27c" stroke="#3a2c1f" stroke-width="2.4"/>
<path d="M595.7 137C603 136 610 134 617.3 132.3C624 130 628 127 631 124.6C634 130 636 136 637.3 143C640 150 642 156 643.5 161.6L643.5 177C641 182 638 185 635.8 186.3C630 191 622 194 615.7 194C605 193 598 188 595.7 181.6C592 175 591 170 591 164.7C591 155 593 145 595.7 137Z" fill="#f0b27c" stroke="#3a2c1f" stroke-width="2.8"/>
<circle cx="649.6" cy="170.8" r="8" fill="#f0b27c" stroke="#3a2c1f" stroke-width="2.4"/>
<path d="M648 168q-3 3 -1 6" stroke="#3a2c1f" stroke-width="1.4" fill="none"/>
<ellipse cx="602.6" cy="154" rx="2.8" ry="4" fill="#3a2c1f"/>
<ellipse cx="625" cy="157.7" rx="2.8" ry="4" fill="#3a2c1f"/>
<path d="M598 144q6 -4 11 0M622 146q7 -1 12 4" stroke="#3a2c1f" stroke-width="1.8" fill="none"/>
<path d="M609 159q-5 4 1 8" stroke="#3a2c1f" stroke-width="1.6" fill="none"/>
<path d="M603.4 174.7C610 174 618 173.5 625 173.2C624 181 619 187 614.2 187C608 187 604 181 603.4 174.7Z" fill="#3a2c1f" stroke="#3a2c1f" stroke-width="1.5"/>
<path d="M608 183.5Q614 188 621 181Q614 179 608 183.5Z" fill="#e0603e"/>
<!-- bench seat -->
<path d="M473 306L700 304.5L722 313L722 327.5L473 320Z" fill="#96653c" stroke="#3a2c1f" stroke-width="2.8"/>
<rect x="656" y="322" width="14" height="50" fill="#7d5232" stroke="#3a2c1f" stroke-width="2.4"/>
<rect x="697" y="322" width="12" height="40" fill="#7d5232" stroke="#3a2c1f" stroke-width="2.4"/>
<!-- man -->
<path d="M453 282C452 265 452 250 454 240C456 225 462 212 471.7 207C478 202 486 199 495 198L525.7 198C533 201 540 204 543.7 208.4C548 216 550 224 550 231.6C550 245 549 258 547 270L550 282Z" fill="#6e6259" stroke="#3a2c1f" stroke-width="2.8"/>
<path d="M476.2 222.6V241.8M524.4 223.8L523 239.3" stroke="#3a2c1f" stroke-width="2.2"/>
<path d="M452.4 259.8C455 266 458 270 461.4 271.4C470 273 485 272 494.8 270" stroke="#3a2c1f" stroke-width="2.6" fill="none"/>
<path d="M479.4 257.3C488 260 497 263 503.8 266.3C510 270 517 274 523 275.3L536 275.3C542 272 546 266 547.5 257.3" stroke="#3a2c1f" stroke-width="2.6" fill="none"/>
<path d="M484.6 244.4C492 245 502 247 510.3 249.6" stroke="#3a2c1f" stroke-width="2.6" fill="none"/>
<path d="M469 247C472 244 477 243 484.6 244.4L480.7 256C476 257 470 255 468 252C467 250 467.5 248.5 469 247Z" fill="#f0b27c" stroke="#3a2c1f" stroke-width="2.2"/>
<path d="M510.3 249.6C513 245 518 242 524 241.8C529 242 531 246 530.8 250C530 254 526 256 521 256C516 255 512 252 510.3 249.6Z" fill="#f0b27c" stroke="#3a2c1f" stroke-width="2.2"/>
<path d="M519 250l6 3M521 247l6 2" stroke="#3a2c1f" stroke-width="1.3"/>
<path d="M445 300C444 285 455 281 470 281L540 281C550 283 550 300 540 304L514 304L514 350L484 350L484 304L474 304L474 349L445 349Z" fill="#4d4038" stroke="#3a2c1f" stroke-width="2.8"/>
<path d="M442 350C442 347 474 347 474 350L474 362C470 364 445 364 442 358Z" fill="#4a3e37" stroke="#3a2c1f" stroke-width="2.4"/>
<path d="M475 352C478 350 514 350 514 352L514 367C510 370 480 370 475 362Z" fill="#4a3e37" stroke="#3a2c1f" stroke-width="2.4"/>
<path d="M491 192L491 212C495 219 515 220 521 210L521 192Z" fill="#f0b27c" stroke="#3a2c1f" stroke-width="2.8"/>
<path d="M463 130L463 185C465 198 478 206 494 207C505 207 514 200 518 193L524 130Z" fill="#f0b27c" stroke="#3a2c1f" stroke-width="2.8"/>
<circle cx="530" cy="177" r="9.5" fill="#f0b27c" stroke="#3a2c1f" stroke-width="2.4"/>
<path d="M461.4 140C458 125 470 116 495 115.7C520 115.7 538 125 538 149C538 162 532 168 524 170L520.9 170C518 160 516 150 515 143.5C500 141 485 141 468.8 142.4Z" fill="#5a4535" stroke="#3a2c1f" stroke-width="2.8"/>
<ellipse cx="475.7" cy="169" rx="3" ry="4.2" fill="#3a2c1f"/>
<ellipse cx="500" cy="170" rx="3" ry="4.2" fill="#3a2c1f"/>
<path d="M468 161q10 -6 20 -2M494 159q10 -1 17 6" stroke="#3a2c1f" stroke-width="2.4" fill="none"/>
<path d="M482 177q-4 4 1 7" stroke="#3a2c1f" stroke-width="1.6" fill="none"/>
<path d="M482 195q7 -6 14 1" stroke="#3a2c1f" stroke-width="2.4" fill="none"/>
<!-- yellow boy -->
<rect x="567" y="405" width="97" height="20" fill="#9b6a3d" stroke="#3a2c1f" stroke-width="2.4"/>
<path d="M543 421L543 400C545 392 553 386 563 383.8L638 393.6C640 400 636 406 629.9 410.2L607.7 413L600 421Z" fill="#3d5f7e" stroke="#3a2c1f" stroke-width="2.8"/>
<path d="M541 421C540 405 544 388 555 387C566 387 570 400 569 421Z" fill="#f0b27c" stroke="#3a2c1f" stroke-width="2.6"/>
<path d="M578 421C577 405 582 388 592 388C603 388 607 400 606 421Z" fill="#f0b27c" stroke="#3a2c1f" stroke-width="2.6"/>
<path d="M543 421L543 417L571 417L571 421Z" fill="#f3efe6"/>
<path d="M552 391L552 357.4C554 345 559 333 566 328.3C572 324 578 321 585 319L613.2 318.6C620 323 626 328 630 333.8C635 345 638 356 638 368.6L638 393.6Z" fill="#f0b040" stroke="#3a2c1f" stroke-width="2.8"/>
<path d="M571.5 343.6V358.8M611.8 335L606.3 355" stroke="#3a2c1f" stroke-width="2.2"/>
<path d="M552 360C551 368 552 374 554.9 378.3C563 381 572 382 582.7 382.4C592 384 601 385 610.4 385.2C617 384 622 381 624.3 378.3C627 374 628 370 630 367L552 360Z" fill="#f0b27c" stroke="#3a2c1f" stroke-width="2.6"/>
<path d="M552 358C560 359 566 359 571.5 358.8L600 362C610 363 620 366 630 367" stroke="#3a2c1f" stroke-width="2.6" fill="none"/>
<path d="M564.6 361.6C572 366 580 370 586.8 372.7C592 376 596 378 599.3 379.7" stroke="#3a2c1f" stroke-width="2.2" fill="none"/>
<path d="M568.8 360.2C580 359 590 360 599.3 361C603 362 606 365 604 369C600 370 596 369 592 367" stroke="#3a2c1f" stroke-width="2.2" fill="none"/>
<path d="M582 318L582 332C588 338 600 338 604 330L604 318Z" fill="#f0b27c" stroke="#3a2c1f" stroke-width="2.8"/>
<path d="M553 265L553 305C556 318 568 328 582.3 328.3C595 328 604 322 608.5 317.5L616 280L612 262Z" fill="#f0b27c" stroke="#3a2c1f" stroke-width="2.8"/>
<circle cx="622.4" cy="295.9" r="10" fill="#f0b27c" stroke="#3a2c1f" stroke-width="2.4"/>
<path d="M546.8 265C540 248 555 234 585 234.2C612 234 633 245 632.5 266.6C632 278 630 284 628.6 286.6L614.7 289.7C610 280 605 270 602.4 260.4C590 265 580 268 573 269C574 264 576 261 577.7 258C575 262 570 266 568.4 267.4C560 266 552 266 546.8 265Z" fill="#6e4a32" stroke="#3a2c1f" stroke-width="2.8"/>
<ellipse cx="563.8" cy="292.8" rx="3" ry="4.5" fill="#3a2c1f"/>
<ellipse cx="589.2" cy="293.6" rx="3" ry="4.5" fill="#3a2c1f"/>
<path d="M557 283q8 -5 17 -4M585 279q9 0 15 5" stroke="#3a2c1f" stroke-width="2.4" fill="none"/>
<path d="M574 298q-5 4 1 8" stroke="#3a2c1f" stroke-width="1.6" fill="none"/>
<path d="M570.7 319q5 -6 10 -3q4 1 7 4" stroke="#3a2c1f" stroke-width="2.4" fill="none"/>
<!-- red boy -->
<path d="M296 421C300 416 305 414 310 416L300 421Z" fill="#4a3e37" stroke="#3a2c1f" stroke-width="2.4"/>
<path d="M410 421C412 417 420 416 426 419L426 421Z" fill="#4a3e37" stroke="#3a2c1f" stroke-width="2.4"/>
<path d="M322.6 398L341.6 412.3L340 421L302 421C306 412 312 404 322.6 398Z" fill="#f0b27c" stroke="#3a2c1f" stroke-width="2.6"/>
<path d="M302 421C305 416 310 413 316 412.5C325 413 333 416 338 421Z" fill="#f3efe6" stroke="#3a2c1f" stroke-width="2.4"/>
<path d="M321 396.4C328 390 336 386 343 383.7L405 396.4L401.9 421L362 421L349.5 409L341.6 412.3Z" fill="#3d5f7e" stroke="#3a2c1f" stroke-width="2.8"/>
<path d="M349.5 409L343 402" stroke="#3a2c1f" stroke-width="2.2"/>
<path d="M421 366L438.3 345.7C445 352 452 365 456 380L463.7 399.6C465 406 460 409 455 407C448 408 440 402 437 395L435 385Z" fill="#f0b27c" stroke="#3a2c1f" stroke-width="2.8"/>
<path d="M447 400l1 6M453 401l0 6" stroke="#3a2c1f" stroke-width="1.5"/>
<path d="M333.6 333C345 326 360 324 375 323L405 323C420 325 432 333 438.3 345.7L421 366.3L409.8 355.2L405 396.4L346.4 383.7L340 358.4Z" fill="#c04c34" stroke="#3a2c1f" stroke-width="2.8"/>
<path d="M356 338L355 358M408 345L409.8 355.2" stroke="#3a2c1f" stroke-width="2.2"/>
<path d="M332 337.8L306.7 340C300 335 290 333 282 335.5C276 339 275 345 279 350C283 355 292 357 302 356L340 356.8Z" fill="#f0b27c" stroke="#3a2c1f" stroke-width="2.8"/>
<path d="M281 343q6 -4 12 -1M283 349q5 -2 9 0" stroke="#3a2c1f" stroke-width="1.5" fill="none"/>
<path d="M373 320L373 333C380 340 395 340 398 332L398 320Z" fill="#f0b27c" stroke="#3a2c1f" stroke-width="2.8"/>
<path d="M353.3 262L353.3 295C354 315 370 329 392 329.5C402 329 410 322 415 315.6L425 290L420 262Z" fill="#f0b27c" stroke="#3a2c1f" stroke-width="2.8"/>
<circle cx="423.6" cy="301.7" r="9" fill="#f0b27c" stroke="#3a2c1f" stroke-width="2.4"/>
<path d="M349.5 263C344 246 362 233.5 390 233.5C418 234 437 248 435 272C434 285 428 292 419.7 294C417 283 412 272 409 263C398 267 386 269 378 269.3C372 266 368 262 365.7 259C363 263 358 265 349.5 263Z" fill="#6e4a32" stroke="#3a2c1f" stroke-width="2.8"/>
<path d="M422 244q4 6 2 12M426 254q5 -1 8 2" stroke="#3a2c1f" stroke-width="1.6" fill="none"/>
<ellipse cx="367.2" cy="290" rx="2.8" ry="4.5" fill="#3a2c1f"/>
<ellipse cx="392" cy="292.4" rx="2.8" ry="4.5" fill="#3a2c1f"/>
<path d="M358 278q6 -6 13 -1M389 278q8 -2 12 4" stroke="#3a2c1f" stroke-width="1.8" fill="none"/>
<path d="M374 297q-6 4 0 8" stroke="#3a2c1f" stroke-width="1.6" fill="none"/>
<path d="M370.3 311C375 312 388 311 394.2 309C394 318 388 323 381 323C375 323 371 318 370.3 311Z" fill="#3a2c1f" stroke="#3a2c1f" stroke-width="1.5"/>
<path d="M376 319Q383 322 390 315Q382 313 376 319Z" fill="#e0603e"/>
<!-- ball -->
<circle cx="238.6" cy="421" r="34" fill="#f3efe6" stroke="#3a2c1f" stroke-width="2.8"/>
<path d="M238 401L251 407L249.7 421L227.5 421L226 407Z" fill="#3a2c1f"/>
<path d="M207 400L214 393L223 397L221 408L210 410Z" fill="#3a2c1f"/>
<path d="M248 388.5L258 390L262 399.6L252 399Z" fill="#3a2c1f"/>
<path d="M266 408L272 410L273 421L265 421Z" fill="#3a2c1f"/>
<path d="M238 401L240 388M251 407L262 399.6M226 407L221 408M249.7 421L265 421M251 407L266 408" stroke="#3a2c1f" stroke-width="1.6"/>
</g>
</svg>
</body></html>
